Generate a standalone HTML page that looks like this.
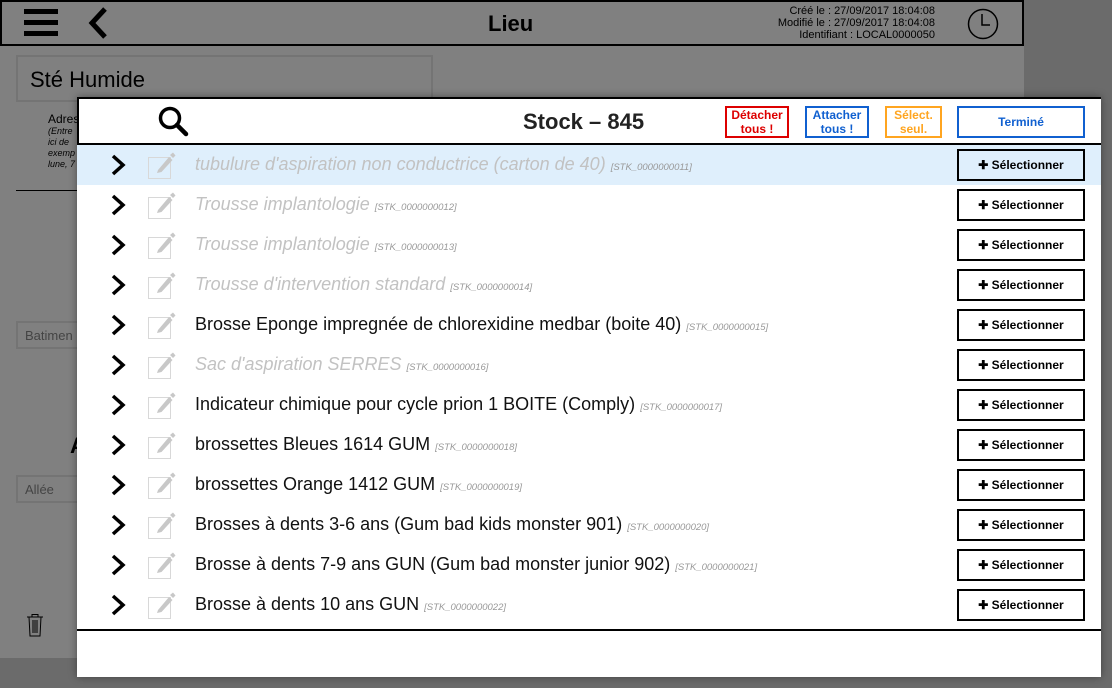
<!DOCTYPE html>
<html><head><meta charset="utf-8"><style>
*{margin:0;padding:0;box-sizing:border-box}
body{width:1112px;height:688px;overflow:hidden;background:#6b6b6b;font-family:"Liberation Sans",Arial,sans-serif;position:relative}
.page{position:absolute;left:0;top:0;width:1024px;height:658px;background:#808080}
.hdr{position:absolute;left:0;top:0;width:1024px;height:46px;border:2px solid #000;background:#808080}
.abs{position:absolute}
.modal{position:absolute;left:77px;top:97px;width:1024px;height:580px;background:#fff;box-shadow:0 0 8px rgba(0,0,0,.4)}
.mh{position:absolute;left:0;top:0;width:1024px;height:48px;border:2px solid #000;border-right:none}
.btn{position:absolute;border:2px solid;font-weight:bold;font-size:12px;text-align:center;line-height:14px;display:flex;align-items:center;justify-content:center}
.row{position:absolute;left:0;width:1024px;height:40px}
.row .t{position:absolute;left:118px;top:9px;font-size:18px;color:#111;white-space:nowrap}
.row .t.g{color:#c2c2c2;font-style:italic}
.row .t small{font-size:9.5px;color:#999;font-style:italic}
.sel{position:absolute;left:880px;top:4px;width:128px;height:32px;border:2px solid #000;font-weight:bold;font-size:12px;display:flex;align-items:center;justify-content:center}
.chev{position:absolute;left:32px;top:9px}
.ed{position:absolute;left:69px;top:6px}
</style></head><body>
<div class="page">
<div class="hdr">
 <div class="abs" style="left:22px;top:7px;width:34px;height:5px;background:#000"></div>
 <div class="abs" style="left:22px;top:18px;width:34px;height:5px;background:#000"></div>
 <div class="abs" style="left:22px;top:29px;width:34px;height:5px;background:#000"></div>
 <svg class="abs" style="left:84px;top:4px" width="24" height="34"><path d="M19 3 L6 17 L19 31" stroke="#000" stroke-width="5" fill="none"/></svg>
 <div class="abs" style="left:486px;top:9px;font-size:22px;font-weight:bold">Lieu</div>
 <div class="abs" style="left:700px;top:3px;width:233px;text-align:right;font-size:11px;line-height:12px">Créé le : 27/09/2017 18:04:08<br>Modifié le : 27/09/2017 18:04:08<br>Identifiant : LOCAL0000050</div>
 <svg class="abs" style="left:965px;top:6px" width="32" height="32"><circle cx="16" cy="16" r="14.5" fill="none" stroke="#000" stroke-width="1.5"/><path d="M15 6 V17 H23" fill="none" stroke="#000" stroke-width="1.5"/></svg>
</div>
<div class="abs" style="left:16px;top:55px;width:417px;height:47px;border:2px solid #747474;font-size:22px;padding:10px 12px">Sté Humide</div>
<div class="abs" style="left:48px;top:112px;font-size:12px">Adres</div>
<div class="abs" style="left:48px;top:126px;font-size:9px;font-style:italic;line-height:11px">(Entre<br>ici de<br>exemp<br>lune, 7</div>
<div class="abs" style="left:16px;top:190px;width:70px;height:1px;background:#000"></div>
<div class="abs" style="left:16px;top:321px;width:70px;height:28px;border:2px solid #747474;font-size:13px;color:#444;padding:5px 7px">Batimen</div>
<div class="abs" style="left:70px;top:433px;width:10px;height:24px;font-size:22px;font-weight:bold;color:#000">A</div>
<div class="abs" style="left:16px;top:475px;width:70px;height:28px;border:2px solid #747474;font-size:13px;color:#444;padding:5px 7px">Allée</div>
<svg class="abs" style="left:25px;top:612px" width="20" height="26"><path d="M2 5H18M7 5V2.5H13V5M4 5L5 24H15L16 5M8 8V21M10 8V21M12 8V21" fill="none" stroke="#000" stroke-width="1"/></svg>
</div>
<div class="modal">
 <div class="mh">
  <svg class="abs" style="left:78px;top:6px" width="34" height="34"><circle cx="13" cy="13" r="9.5" fill="none" stroke="#000" stroke-width="3.5"/><path d="M20 20L29 29" stroke="#000" stroke-width="4.5" stroke-linecap="round"/></svg>
  <div class="abs" style="left:444px;top:10px;font-size:22px;font-weight:bold;color:#222">Stock – 845</div>
  <div class="btn" style="left:646px;top:7px;width:64px;height:32px;border-color:#d00;color:#d00">Détacher<br>tous !</div>
  <div class="btn" style="left:726px;top:7px;width:64px;height:32px;border-color:#1060d0;color:#1060d0">Attacher<br>tous !</div>
  <div class="btn" style="left:806px;top:7px;width:57px;height:32px;border-color:#ffa520;color:#ffa520">Sélect.<br>seul.</div>
  <div class="btn" style="left:878px;top:7px;width:128px;height:32px;border-color:#1060d0;color:#1060d0">Terminé</div>
 </div>
 <div id="rows"></div>
 <div class="abs" style="left:0;top:532px;width:1024px;height:2px;background:#000"></div>
</div>
<script>
var d=[["tubulure d'aspiration non conductrice (carton de 40)",11,1],["Trousse implantologie",12,1],["Trousse implantologie",13,1],["Trousse d'intervention standard",14,1],["Brosse Eponge impregnée de chlorexidine medbar (boite 40)",15,0],["Sac d'aspiration SERRES",16,1],["Indicateur chimique pour cycle prion 1 BOITE (Comply)",17,0],["brossettes Bleues 1614 GUM",18,0],["brossettes Orange 1412 GUM",19,0],["Brosses à dents 3-6 ans (Gum bad kids monster 901)",20,0],["Brosse à dents 7-9 ans GUN (Gum bad monster junior 902)",21,0],["Brosse à dents 10 ans GUN",22,0]];
var h="";
d.forEach(function(r,i){
h+='<div class="row" style="top:'+(48+40*i)+'px;'+(i==0?'background:#dfeffc':'')+'">'+
'<svg class="chev" width="18" height="22"><path d="M4 2L14 11L4 20" fill="none" stroke="#000" stroke-width="3.5"/></svg>'+
'<svg class="ed" width="30" height="28"><rect x="2.5" y="6.5" width="22" height="21" fill="none" stroke="#d8d8d8"/><path d="M12 19L23 6L26.5 9L15.5 21L11 22Z" fill="#c8c8c8"/><path d="M24 4L27 1.5L29.5 4.5L27 7Z" fill="#c8c8c8"/></svg>'+
'<div class="t'+(r[2]?' g':'')+'">'+r[0]+' <small>[STK_00000000'+r[1]+']</small></div>'+
'<div class="sel">✚&nbsp;Sélectionner</div></div>';});
document.getElementById('rows').innerHTML=h;
</script>
</body></html>
